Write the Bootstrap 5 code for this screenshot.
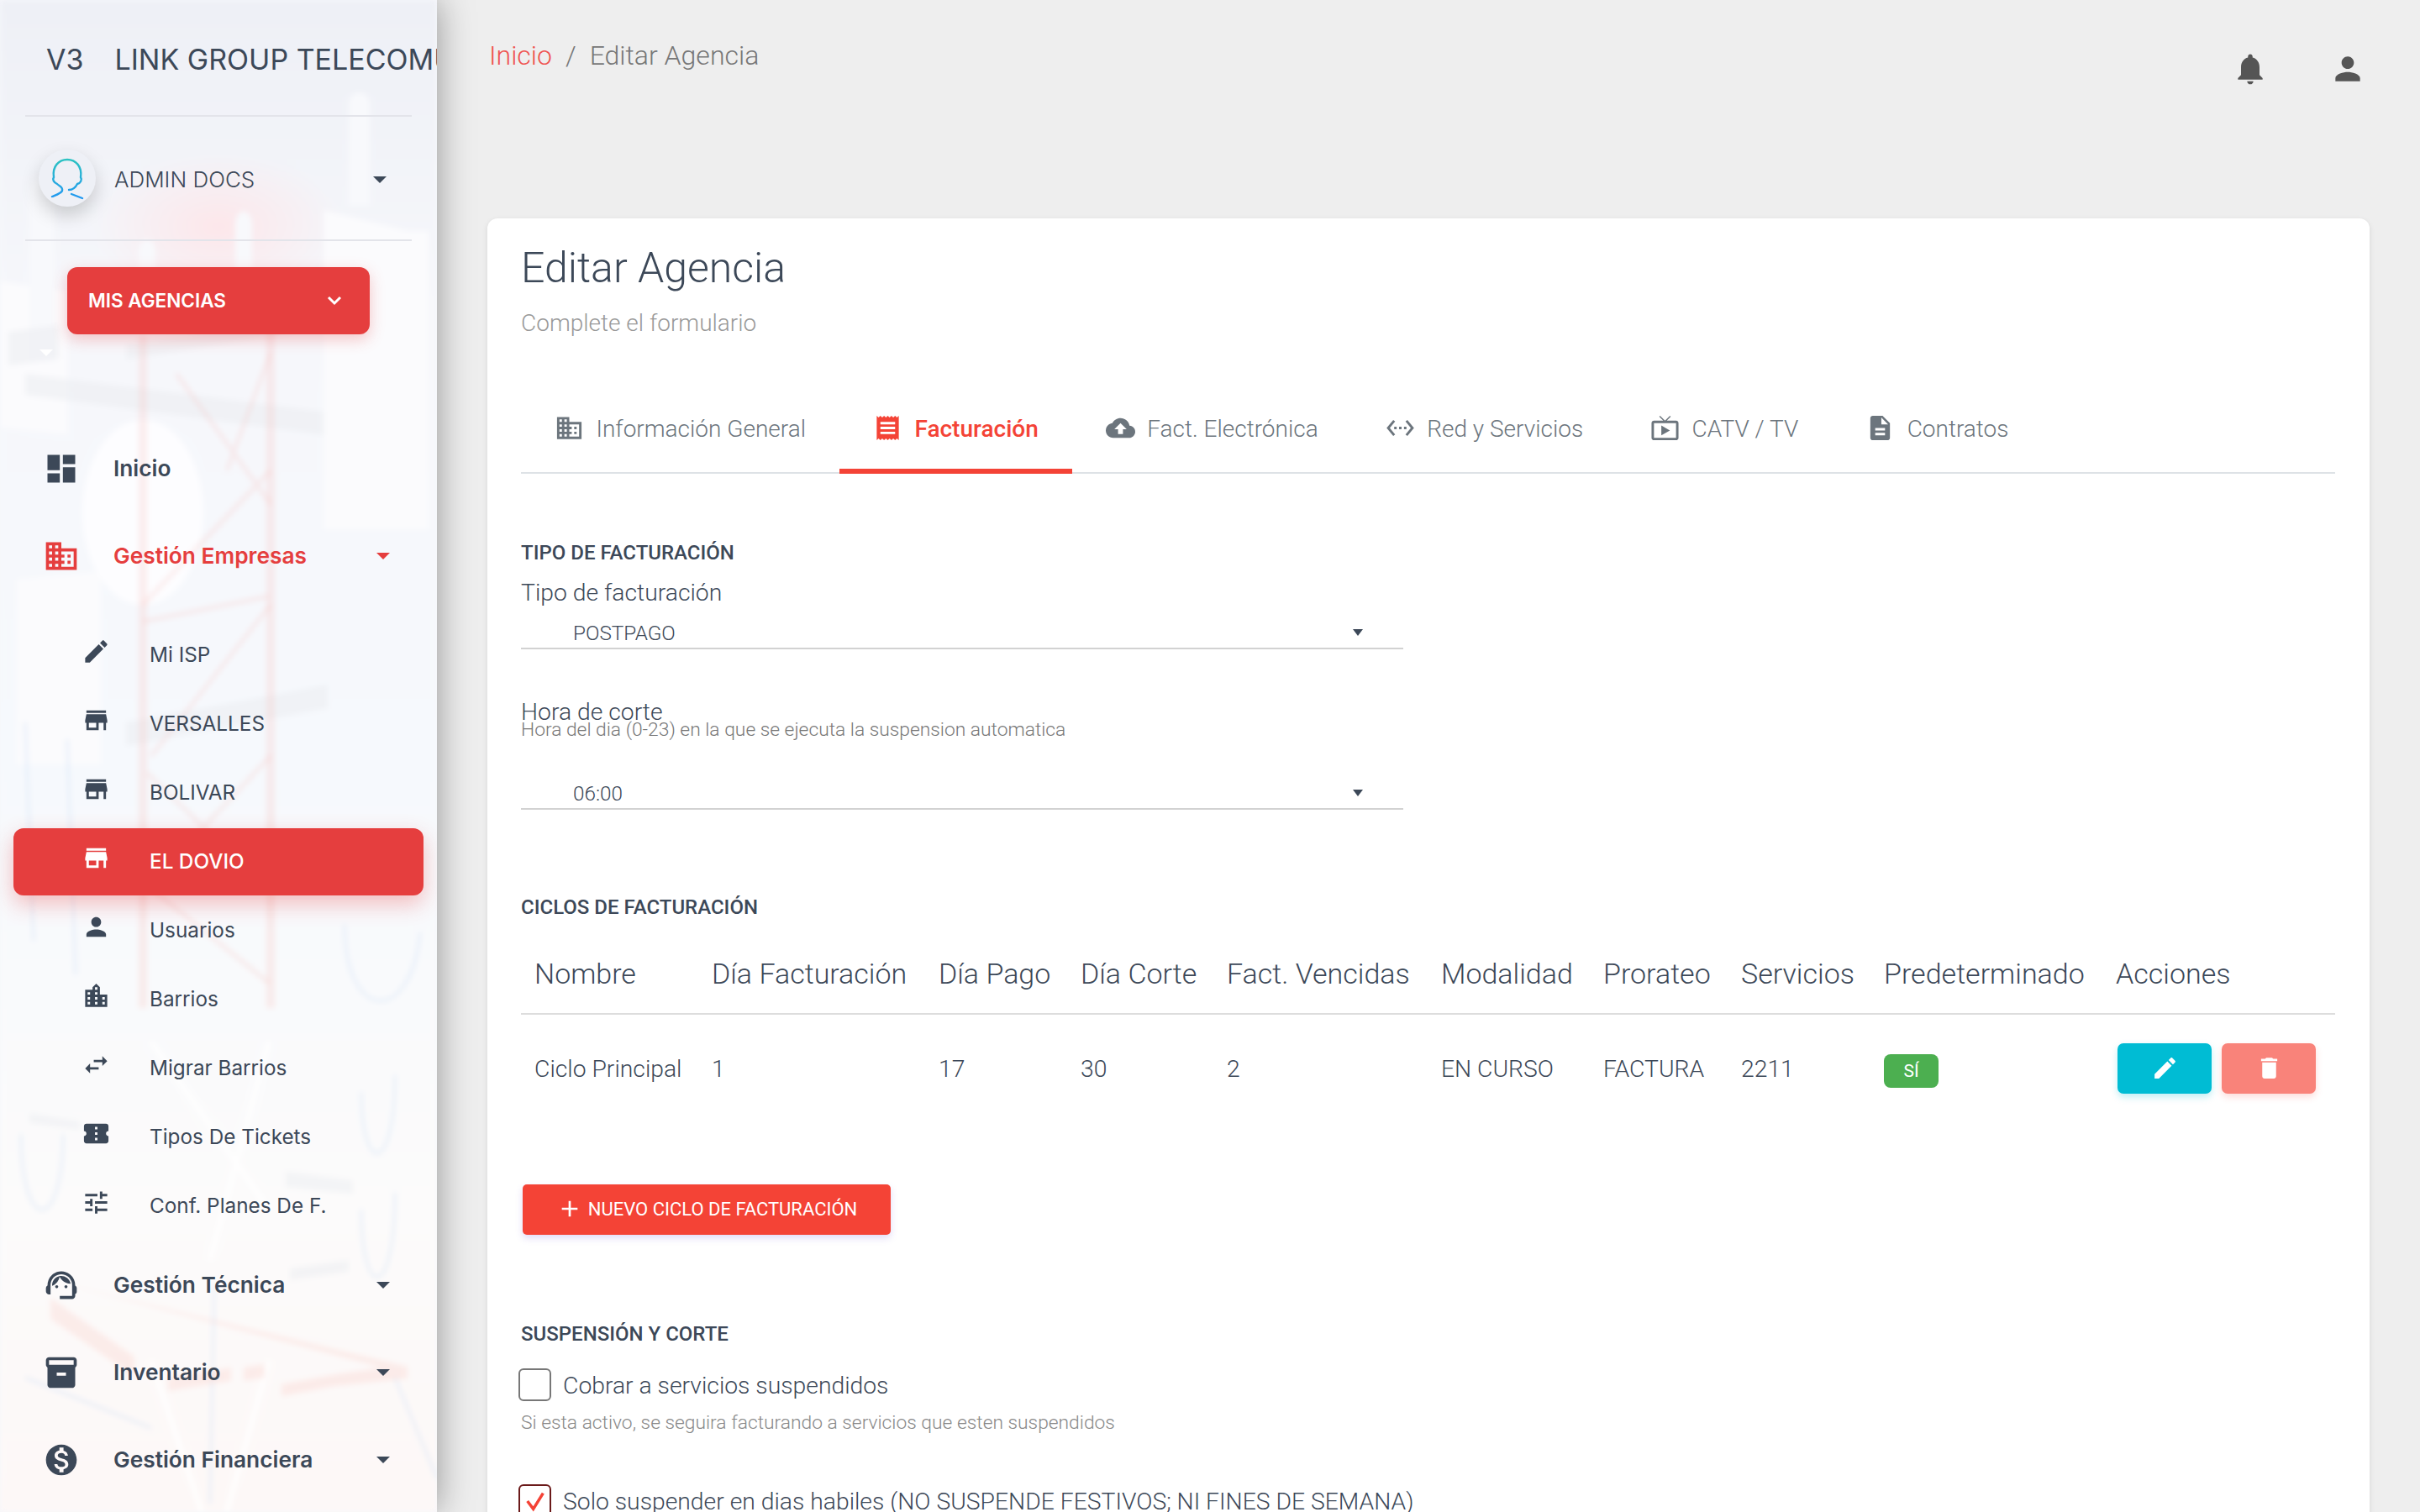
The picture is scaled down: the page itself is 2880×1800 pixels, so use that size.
<!DOCTYPE html>
<html lang="es">
<head>
    <meta charset="UTF-8">
    <meta name="viewport" content="width=device-width, initial-scale=1.0">
    <title>Editar Agencia</title>
    <link href="https://cdn.jsdelivr.net/npm/bootstrap@5.3.3/dist/css/bootstrap.min.css" rel="stylesheet">
    <style>
        html, body { height: 100%; }
        body { background: #eee; font-family: Roboto, "Liberation Sans", sans-serif; font-weight: 300; color: #3c4858; overflow: hidden; }
        svg { flex-shrink: 0; display: block; }
        svg:not([fill]) { fill: currentColor; }

        /* sidebar */
        .side-bar { width: 520px; height: 1800px; position: relative; overflow: hidden; flex-shrink: 0; font-family: Inter, "Liberation Sans", sans-serif; box-shadow: 0 0 40px rgba(0,0,0,.38); z-index: 2; background: #f6f7fb; }
        .side-art { position: absolute; left: 0; top: 0; width: 520px; height: 1800px; filter: blur(3px); }
        .side-inner { position: relative; }
        .side-logo { height: 139px; margin: 0 30px; padding: 3px 0 0 25px; border-bottom: 2px solid #e3e4ea; gap: 37px; font-size: 34px; font-weight: 400; white-space: nowrap; color: #3c4858; }
        .side-user { height: 148px; margin: 0 30px; padding: 3px 30px 0 16px; border-bottom: 2px solid #e3e4ea; font-size: 26px; }
        .side-avatar { width: 68px; height: 68px; border-radius: 50%; background: #eef0f6; box-shadow: 0 10px 22px rgba(0,0,0,.18); margin-right: 22px; margin-top: -3px; }
        .side-caret { width: 0; height: 0; border-left: 8px solid transparent; border-right: 8px solid transparent; border-top: 8px solid currentColor; }
        .side-agency { margin: 31px 0 0 80px; width: 360px; height: 80px; padding: 0 32px 0 24px; background: #e53e3e; color: #fff; border-radius: 12px; font-size: 22.5px; font-weight: 600; box-shadow: 0 6px 18px rgba(229,62,62,.28); }
        .side-agency:hover { background: #e53e3e; color: #fff; }
        .side-tick { left: 47px; top: 416px; border-left: 8px solid transparent; border-right: 8px solid transparent; border-top: 8px solid #fff; }
        .side-nav { margin: 120px 16px 0; gap: 24px; }
        .side-main { height: 80px; padding: 0 40px 0 35px; gap: 40px; font-size: 26.3px; font-weight: 600; color: #3c4858; text-decoration: none; }
        .side-main svg { width: 44px; height: 44px; }
        .side-main.is-open { color: #e53e3e; }
        .side-sub { margin-top: 14px; margin-bottom: -10px; gap: 2px; }
        .side-item { height: 80px; padding-left: 81px; gap: 46px; font-size: 24.3px; font-weight: 400; color: #3c4858; text-decoration: none; border-radius: 12px; padding-bottom: 1px; }
        .side-item svg { width: 35px; height: 35px; margin-top: -8px; }
        .side-item.is-active { background: #e53e3e; color: #fff; font-weight: 500; box-shadow: 0 10px 26px rgba(229,62,62,.32); }

        /* top bar */
        .page-main { min-width: 0; }
        .top-bar { height: 260px; padding: 39px 60px 0 62px; }
        .top-bar .breadcrumb { font-size: 32px; margin: 0; line-height: 54px; --bs-breadcrumb-divider-color: #777; --bs-breadcrumb-item-active-color: #777; --bs-breadcrumb-item-padding-x: 16px; }
        .top-bar .breadcrumb a { color: #ef5350; text-decoration: none; }
        .top-icons { gap: 72px; color: #555; padding-top: 21px; padding-right: 4px; }
        .top-icons svg { width: 44px; height: 44px; }

        /* card */
        .form-card { margin: 0 60px; padding: 29px 41px 0 40px; height: 1600px; border: 0; border-radius: 12px; box-shadow: 0 2px 6px rgba(0,0,0,.1); }
        .form-title { font-size: 50px; font-weight: 300; line-height: 60px; margin: 0; color: #3c4858; }
        .form-sub { font-size: 28px; line-height: 36px; margin: 18px 0 0; color: #999; }
        .form-tabs { margin-top: 53px; border-bottom: 2px solid #dee2e6; height: 108px; }
        .form-tabs .nav-link { height: 108px; padding: 7px 40px 0; gap: 14.5px; font-size: 28px; font-weight: 300; color: #6c757d; border-bottom: 6px solid transparent; border-radius: 0; margin-bottom: -2px; }
        .form-tabs .nav-link svg { width: 35px; height: 35px; margin-top: -2px; }
        .form-tabs .nav-link.is-on { color: #f44336; font-weight: 500; border-bottom-color: #f44336; }
        .sec-head { font-size: 24px; font-weight: 500; line-height: 30px; margin: 0; color: #3c4858; }
        .sec-one { margin-top: 79px; }
        .sec-two { margin-top: 101px; }
        .sec-three { margin-top: 103px; }
        .fld-label { font-size: 28.3px; line-height: 36px; margin: 15px 0 0; display: block; color: #3c4858; }
        .fld-select { width: 1050px; height: 43px; padding: 6px 40px 0 62px; font-size: 24.3px; font-weight: 300; color: #3c4858; border: 0; border-bottom: 2px solid #d2d2d2; border-radius: 0; background-color: transparent; background-size: 12px 8px; background-position: right 48px top 19px; background-image: url("data:image/svg+xml,%3csvg xmlns='http://www.w3.org/2000/svg' viewBox='0 0 12 8'%3e%3cpath fill='%233c4858' d='M0 0h12L6 8z'/%3e%3c/svg%3e"); box-shadow: none; }
        .fld-select-a { margin-top: 6px; }
        .fld-cut { margin-top: 60px; line-height: 30px; }
        .fld-help { font-size: 22.8px; line-height: 22px; color: #777; margin: -5px 0 0; }
        .fld-select-b { margin-top: 41px; }
        .cycle-table { margin: 16px 0 0; table-layout: fixed; width: 2159px; --bs-table-bg: transparent; }
        .cycle-table col:nth-child(1) { width: 211px; }
        .cycle-table col:nth-child(2) { width: 270px; }
        .cycle-table col:nth-child(3) { width: 169px; }
        .cycle-table col:nth-child(4) { width: 174px; }
        .cycle-table col:nth-child(5) { width: 255px; }
        .cycle-table col:nth-child(6) { width: 193px; }
        .cycle-table col:nth-child(7) { width: 164px; }
        .cycle-table col:nth-child(8) { width: 170px; }
        .cycle-table col:nth-child(9) { width: 276px; }
        .cycle-table col:nth-child(10) { width: 277px; }
        .cycle-table th { font-size: 34px; font-weight: 300; height: 96px; padding: 2px 0 0 16px; vertical-align: middle; border-bottom: 2px solid #ddd; color: #3c4858; white-space: nowrap; }
        .cycle-table td { font-size: 28.3px; font-weight: 300; height: 128px; padding: 3px 0 0 16px; vertical-align: middle; border: 0; color: #3c4858; }
        .cycle-yes { background: #4caf50; font-size: 21px; font-weight: 400; width: 65px; height: 40px; border-radius: 8px; line-height: 40px; padding: 0; display: block; margin-top: 4px; }
        .act-group { gap: 12px; margin-left: 2px; margin-top: -3px; }
        .act-btn { width: 112px; height: 60px; padding: 0; border: 0; border-radius: 7px; color: #fff; }
        .act-btn svg { width: 33px; height: 33px; }
        .act-edit { background: #00bcd4; box-shadow: 0 4px 8px rgba(0,188,212,.25); }
        .act-del { background: #f9837a; box-shadow: 0 4px 8px rgba(244,67,54,.18); }
        .act-edit:hover { background: #00bcd4; color: #fff; }
        .act-del:hover { background: #f9837a; color: #fff; }
        .add-btn { margin: 75px 0 0 2px; width: 438px; height: 60px; padding: 0 0 2px; background: #f44336; color: #fff; border: 0; border-radius: 5px; gap: 6px; font-size: 22px; font-weight: 400; box-shadow: 0 4px 8px rgba(120,90,220,.22); }
        .add-btn:hover { background: #f44336; color: #fff; }
        .add-btn svg { width: 32px; height: 32px; }
        .chk-row { gap: 14px; margin: 25px 0 0 -3px; padding: 0; min-height: 0; }
        .chk-row .form-check-input { width: 39px; height: 39px; margin: 0; float: none; border: 2px solid #777; border-radius: 6px; background-color: #fff; box-shadow: none; flex-shrink: 0; }
        .chk-row .form-check-input:checked { border-color: #6b1a1a; background-color: #fff; background-size: 28px; background-image: url("data:image/svg+xml,%3csvg xmlns='http://www.w3.org/2000/svg' viewBox='0 0 24 24'%3e%3cpath fill='none' stroke='%23f44336' stroke-width='3' d='M4 12l6 8L20 4'/%3e%3c/svg%3e"); }
        .chk-row .form-check-label { font-size: 28.3px; line-height: 39px; padding-top: 2px; color: #3c4858; white-space: nowrap; }
        .chk-help { font-size: 22.8px; line-height: 30px; color: #888; margin: 10px 0 0; }
        .chk-second { margin-top: 57px; }
    </style>
</head>
<body>

<div class="d-flex">
    <aside class="side-bar">
        <!-- faint photo of the antenna tower, behind the menu -->
        <svg class="side-art" viewBox="0 0 520 1800" fill="none">
            <defs>
                <linearGradient id="artBg" x1="0" y1="0" x2="0" y2="1">
                    <stop offset="0" stop-color="#eef0f6"/>
                    <stop offset=".2" stop-color="#f6f7fb"/>
                    <stop offset=".5" stop-color="#f6f9fd"/>
                    <stop offset=".8" stop-color="#fcfbfb"/>
                    <stop offset="1" stop-color="#fdf8f7"/>
                </linearGradient>
                <radialGradient id="artGlow">
                    <stop offset="0" stop-color="#ffe3e6" stop-opacity=".8"/>
                    <stop offset="1" stop-color="#ffe3e6" stop-opacity="0"/>
                </radialGradient>
            </defs>
            <rect width="520" height="1800" fill="url(#artBg)"/>
            <ellipse cx="260" cy="270" rx="150" ry="90" fill="url(#artGlow)"/>
            <path fill="#fbfbfd" d="M0 335l80 12v170l-80-8zM385 250l100 25 25 0V630H385zM20 690l100-10v230H20z"/>
            <path fill="#f8f9fc" d="M35 230c0-25 30-25 30 0v200H35zM415 125c0-20 25-20 25 0v120h-25zM280 268c0-22 20-22 20 0v60h-20zM165 300c0-20 20-20 20 0v40h-20z"/>
            <ellipse cx="170" cy="610" rx="72" ry="110" fill="#fdfdff"/>
            <path fill="#e9ebef" opacity=".5" d="M10 395l60-8v40l-60 8zM30 445l355 45v28L30 470zM150 410l200-30v16l-200 32zM150 860l240-45v28l-240 45z"/>
            <path stroke="#f5b5b0" stroke-width="10" opacity=".22" d="M170 400V1200M322 350V1200"/>
            <path stroke="#f5b5b0" stroke-width="5" opacity=".22" d="M210 445L322 600M322 420L270 560M170 720L322 560M170 740l150 -30M322 720L180 900M175 920l145 140M322 900L200 1030M170 1050l150 120"/>
            <path stroke="#c5daf2" stroke-width="3" opacity=".4" d="M30 860l10 260M80 880l10 280M410 1100c0 120 80 120 90 10M25 1350c0 120 50 120 50 0M430 1300c0 100 40 100 40-20M430 1440c0 110 40 110 40-20M255 1530l-5 260M180 1700L30 1640M470 1640l50 120"/>
            <path stroke="#fff" stroke-width="5" opacity=".9" d="M180 1240L320 1440M320 1240L250 1500M180 1620L240 1800M320 1620L270 1800"/>
            <path fill="#e8ebef" opacity=".45" d="M35 1325l60 10v10l-60-8zM340 1395l80 10v16l-80-8zM345 1510l70-10v14l-70 10z"/>
            <path fill="#f8d0cc" opacity=".35" d="M50 1522l435 105v14L400 1650l-65 12v-14l65-12 55-8-380-100zM60 1545l100 70v24L60 1570zM200 1640l75-12v16l-75 12zM290 1628l25-4v16l-25 4z"/>
        </svg>

        <div class="side-inner">
            <div class="side-logo d-flex align-items-center"><span>V3</span><span>LINK GROUP TELECOMUNICACIONES</span></div>

            <div class="side-user d-flex align-items-center">
                <span class="side-avatar d-flex align-items-center justify-content-center">
                    <svg width="56" height="56" viewBox="0 0 56 56" fill="none" stroke="url(#avatarLine)" stroke-width="2.4" stroke-linecap="round">
                        <defs>
                            <linearGradient id="avatarLine" gradientUnits="userSpaceOnUse" x1="28" y1="4" x2="28" y2="54">
                                <stop offset="0" stop-color="#2cc4c0"/>
                                <stop offset="1" stop-color="#2196f3"/>
                            </linearGradient>
                        </defs>
                        <path d="M16 35c-4-2-6-5-4-8-2-13 6-21 16-21s18 8 16 21c2 3 0 7-4 8-2 4-6 7-10 7M16 35c3 3 7 3 6 8-1 3-7 5-12 7M33 47l13 5"/>
                    </svg>
                </span>
                <span class="flex-grow-1 fw-light">ADMIN DOCS</span>
                <span class="side-caret"></span>
            </div>

            <a href="#" class="btn side-agency d-flex align-items-center justify-content-between">
                <span>MIS AGENCIAS</span>
                <svg width="18" height="12" viewBox="0 0 18 12" fill="none" stroke="#fff" stroke-width="3"><path d="M2 2l7 7 7-7"/></svg>
            </a>
            <span class="side-tick position-absolute"></span>

            <nav class="side-nav d-flex flex-column">
                <a href="#" class="side-main d-flex align-items-center">
                    <svg viewBox="0 0 24 24"><path d="M3 13h8V3H3v10zm0 8h8v-6H3v6zm10 0h8V11h-8v10zm0-18v6h8V3h-8z"/></svg>
                    <span class="flex-grow-1">Inicio</span>
                </a>
                <a href="#" class="side-main is-open d-flex align-items-center">
                    <svg viewBox="0 0 24 24"><path d="M12 7V3H2v18h20V7H12zM6 19H4v-2h2v2zm0-4H4v-2h2v2zm0-4H4V9h2v2zm0-4H4V5h2v2zm4 12H8v-2h2v2zm0-4H8v-2h2v2zm0-4H8V9h2v2zm0-4H8V5h2v2zm10 12h-8v-2h2v-2h-2v-2h2v-2h-2V9h8v10zm-2-8h-2v2h2v-2zm0 4h-2v2h2v-2z"/></svg>
                    <span class="flex-grow-1">Gestión Empresas</span>
                    <span class="side-caret"></span>
                </a>
                <div class="side-sub d-flex flex-column">
                    <a href="#" class="side-item d-flex align-items-center">
                        <svg viewBox="0 0 24 24"><path d="M3 17.25V21h3.75L17.81 9.94l-3.75-3.75L3 17.25zM20.71 7.04c.39-.39.39-1.02 0-1.41l-2.34-2.34c-.39-.39-1.02-.39-1.41 0l-1.83 1.83 3.75 3.75 1.83-1.83z"/></svg>
                        <span>Mi ISP</span>
                    </a>
                    <a href="#" class="side-item d-flex align-items-center">
                        <svg viewBox="0 0 24 24"><path d="M20 4H4v2h16V4zm1 10v-2l-1-5H4l-1 5v2h1v6h10v-6h4v6h2v-6h1zm-9 4H6v-4h6v4z"/></svg>
                        <span>VERSALLES</span>
                    </a>
                    <a href="#" class="side-item d-flex align-items-center">
                        <svg viewBox="0 0 24 24"><path d="M20 4H4v2h16V4zm1 10v-2l-1-5H4l-1 5v2h1v6h10v-6h4v6h2v-6h1zm-9 4H6v-4h6v4z"/></svg>
                        <span>BOLIVAR</span>
                    </a>
                    <a href="#" class="side-item is-active d-flex align-items-center">
                        <svg viewBox="0 0 24 24"><path d="M20 4H4v2h16V4zm1 10v-2l-1-5H4l-1 5v2h1v6h10v-6h4v6h2v-6h1zm-9 4H6v-4h6v4z"/></svg>
                        <span>EL DOVIO</span>
                    </a>
                    <a href="#" class="side-item d-flex align-items-center">
                        <svg viewBox="0 0 24 24"><path d="M12 12c2.21 0 4-1.79 4-4s-1.79-4-4-4-4 1.79-4 4 1.79 4 4 4zm0 2c-2.67 0-8 1.34-8 4v2h16v-2c0-2.66-5.33-4-8-4z"/></svg>
                        <span>Usuarios</span>
                    </a>
                    <a href="#" class="side-item d-flex align-items-center">
                        <svg viewBox="0 0 24 24"><path d="M15 11V5l-3-3-3 3v2H3v14h18V11h-6zm-8 8H5v-2h2v2zm0-4H5v-2h2v2zm0-4H5V9h2v2zm6 8h-2v-2h2v2zm0-4h-2v-2h2v2zm0-4h-2V9h2v2zm0-4h-2V5h2v2zm6 12h-2v-2h2v2zm0-4h-2v-2h2v2z"/></svg>
                        <span>Barrios</span>
                    </a>
                    <a href="#" class="side-item d-flex align-items-center">
                        <svg viewBox="0 0 24 24"><path d="M6.99 11L3 15l3.99 4v-3H14v-2H6.99v-3zM21 9l-3.99-4v3H10v2h7.01v3L21 9z"/></svg>
                        <span>Migrar Barrios</span>
                    </a>
                    <a href="#" class="side-item d-flex align-items-center">
                        <svg viewBox="0 0 24 24"><path d="M22 10V6c0-1.11-.9-2-2-2H4c-1.1 0-1.99.89-1.99 2v4c1.1 0 1.99.9 1.99 2s-.89 2-2 2v4c0 1.1.9 2 2 2h16c1.1 0 2-.9 2-2v-4c-1.1 0-2-.9-2-2s.9-2 2-2zm-9 7.5h-2v-2h2v2zm0-4.5h-2v-2h2v2zm0-4.5h-2v-2h2v2z"/></svg>
                        <span>Tipos De Tickets</span>
                    </a>
                    <a href="#" class="side-item d-flex align-items-center">
                        <svg viewBox="0 0 24 24"><path d="M3 17v2h6v-2H3zM3 5v2h10V5H3zm10 16v-2h8v-2h-8v-2h-2v6h2zM7 9v2H3v2h4v2h2V9H7zm14 4v-2H11v2h10zm-6-4h2V7h4V5h-4V3h-2v6z"/></svg>
                        <span>Conf. Planes De F.</span>
                    </a>
                </div>
                <a href="#" class="side-main d-flex align-items-center">
                    <svg viewBox="0 0 24 24"><path d="M21 12.22C21 6.73 16.74 3 12 3c-4.69 0-9 3.65-9 9.28-.6.34-1 .98-1 1.72v2c0 1.1.9 2 2 2h1v-6.1c0-3.87 3.13-7 7-7s7 3.13 7 7V19h-8v2h8c1.1 0 2-.9 2-2v-1.22c.59-.31 1-.92 1-1.62v-2.3c0-.7-.41-1.31-1-1.64z"/><circle cx="9" cy="13" r="1"/><circle cx="15" cy="13" r="1"/><path d="M18 11.03C17.52 8.18 15.04 6 12.05 6c-3.03 0-6.29 2.51-6.03 6.45 2.47-1.01 4.33-3.21 4.86-5.89 1.31 2.63 4 4.44 7.12 4.47z"/></svg>
                    <span class="flex-grow-1">Gestión Técnica</span>
                    <span class="side-caret"></span>
                </a>
                <a href="#" class="side-main d-flex align-items-center">
                    <svg viewBox="0 0 24 24"><path d="M20 2H4c-1 0-2 .9-2 2v3.01c0 .72.43 1.34 1 1.69V20c0 1.1 1.1 2 2 2h14c.9 0 2-.9 2-2V8.7c.57-.35 1-.97 1-1.69V4c0-1.1-1-2-2-2zm-5 12H9v-2h6v2zm5-7H4V4l16-.02V7z"/></svg>
                    <span class="flex-grow-1">Inventario</span>
                    <span class="side-caret"></span>
                </a>
                <a href="#" class="side-main d-flex align-items-center">
                    <svg viewBox="0 0 24 24"><path d="M12 2C6.48 2 2 6.48 2 12s4.48 10 10 10 10-4.48 10-10S17.52 2 12 2zm1.41 16.09V20h-2.67v-1.93c-1.71-.36-3.16-1.46-3.27-3.4h1.96c.1 1.05.82 1.87 2.65 1.87 1.96 0 2.4-.98 2.4-1.59 0-.83-.44-1.61-2.67-2.14-2.48-.6-4.18-1.62-4.18-3.67 0-1.72 1.39-2.84 3.11-3.21V4h2.67v1.95c1.86.45 2.79 1.86 2.87 3.39H14.3c-.05-1.11-.64-1.87-2.22-1.87-1.5 0-2.4.68-2.4 1.64 0 .84.65 1.39 2.67 1.91s4.18 1.39 4.18 3.91c-.01 1.83-1.38 2.83-3.12 3.16z"/></svg>
                    <span class="flex-grow-1">Gestión Financiera</span>
                    <span class="side-caret"></span>
                </a>
            </nav>
        </div>
    </aside>

    <main class="page-main flex-grow-1">
        <div class="top-bar d-flex justify-content-between align-items-start">
            <ol class="breadcrumb">
                <li class="breadcrumb-item"><a href="#">Inicio</a></li>
                <li class="breadcrumb-item active">Editar Agencia</li>
            </ol>
            <div class="top-icons d-flex">
                <svg viewBox="0 0 24 24"><path d="M12 22c1.1 0 2-.9 2-2h-4c0 1.1.89 2 2 2zm6-6v-5c0-3.07-1.64-5.64-4.5-6.32V4c0-.83-.67-1.5-1.5-1.5s-1.5.67-1.5 1.5v.68C7.63 5.36 6 7.92 6 11v5l-2 2v1h16v-1l-2-2z"/></svg>
                <svg viewBox="0 0 24 24"><path d="M12 12c2.21 0 4-1.79 4-4s-1.79-4-4-4-4 1.79-4 4 1.79 4 4 4zm0 2c-2.67 0-8 1.34-8 4v2h16v-2c0-2.66-5.33-4-8-4z"/></svg>
            </div>
        </div>

        <div class="card form-card">
            <h1 class="form-title">Editar Agencia</h1>
            <p class="form-sub">Complete el formulario</p>

            <ul class="nav form-tabs">
                <li class="nav-item"><a href="#" class="nav-link d-flex align-items-center">
                    <svg viewBox="0 0 24 24"><path d="M12 7V3H2v18h20V7H12zM6 19H4v-2h2v2zm0-4H4v-2h2v2zm0-4H4V9h2v2zm0-4H4V5h2v2zm4 12H8v-2h2v2zm0-4H8v-2h2v2zm0-4H8V9h2v2zm0-4H8V5h2v2zm10 12h-8v-2h2v-2h-2v-2h2v-2h-2V9h8v10zm-2-8h-2v2h2v-2zm0 4h-2v2h2v-2z"/></svg>
                    Información General</a></li>
                <li class="nav-item"><a href="#" class="nav-link is-on d-flex align-items-center">
                    <svg viewBox="0 0 24 24"><path d="M18 17H6v-2h12v2zm0-4H6v-2h12v2zm0-4H6V7h12v2zM3 22l1.5-1.5L6 22l1.5-1.5L9 22l1.5-1.5L12 22l1.5-1.5L15 22l1.5-1.5L18 22l1.5-1.5L21 22V2l-1.5 1.5L18 2l-1.5 1.5L15 2l-1.5 1.5L12 2l-1.5 1.5L9 2 7.5 3.5 6 2 4.5 3.5 3 2v20z"/></svg>
                    Facturación</a></li>
                <li class="nav-item"><a href="#" class="nav-link d-flex align-items-center">
                    <svg viewBox="0 0 24 24"><path d="M19.35 10.04C18.67 6.59 15.64 4 12 4 9.11 4 6.6 5.64 5.35 8.04 2.34 8.36 0 10.91 0 14c0 3.31 2.69 6 6 6h13c2.76 0 5-2.24 5-5 0-2.64-2.05-4.78-4.65-4.96zM14 13v4h-4v-4H7l5-5 5 5h-3z"/></svg>
                    Fact. Electrónica</a></li>
                <li class="nav-item"><a href="#" class="nav-link d-flex align-items-center">
                    <svg viewBox="0 0 24 24"><path d="M7.77 6.76L6.23 5.48.82 12l5.41 6.52 1.54-1.28L3.42 12l4.35-5.24zM7 13h2v-2H7v2zm10-2h-2v2h2v-2zm-6 2h2v-2h-2v2zm6.77-7.52l-1.54 1.28L20.58 12l-4.35 5.24 1.54 1.28L23.18 12l-5.41-6.52z"/></svg>
                    Red y Servicios</a></li>
                <li class="nav-item"><a href="#" class="nav-link d-flex align-items-center">
                    <svg viewBox="0 0 24 24"><path d="M21 6h-7.59l3.29-3.29L16 2l-4 4-4-4-.71.71L10.59 6H3c-1.1 0-2 .89-2 2v12c0 1.1.9 2 2 2h18c1.1 0 2-.9 2-2V8c0-1.11-.9-2-2-2zm0 14H3V8h18v12zM9 10v8l7-4z"/></svg>
                    CATV / TV</a></li>
                <li class="nav-item"><a href="#" class="nav-link d-flex align-items-center">
                    <svg viewBox="0 0 24 24"><path d="M14 2H6c-1.1 0-1.99.9-1.99 2L4 20c0 1.1.89 2 1.99 2H18c1.1 0 2-.9 2-2V8l-6-6zm2 16H8v-2h8v2zm0-4H8v-2h8v2zm-3-5V3.5L18.5 9H13z"/></svg>
                    Contratos</a></li>
            </ul>

            <h2 class="sec-head sec-one">TIPO DE FACTURACIÓN</h2>
            <label class="fld-label" for="tipoFact">Tipo de facturación</label>
            <select class="form-select fld-select fld-select-a" id="tipoFact">
                <option>POSTPAGO</option>
                <option>PREPAGO</option>
            </select>

            <label class="fld-label fld-cut" for="horaCorte">Hora de corte</label>
            <p class="fld-help">Hora del dia (0-23) en la que se ejecuta la suspension automatica</p>
            <select class="form-select fld-select fld-select-b" id="horaCorte">
                <option>06:00</option>
            </select>

            <h2 class="sec-head sec-two">CICLOS DE FACTURACIÓN</h2>
            <table class="table cycle-table">
                <colgroup><col><col><col><col><col><col><col><col><col><col></colgroup>
                <thead>
                    <tr>
                        <th>Nombre</th><th>Día Facturación</th><th>Día Pago</th><th>Día Corte</th><th>Fact. Vencidas</th>
                        <th>Modalidad</th><th>Prorateo</th><th>Servicios</th><th>Predeterminado</th><th>Acciones</th>
                    </tr>
                </thead>
                <tbody>
                    <tr>
                        <td>Ciclo Principal</td><td>1</td><td>17</td><td>30</td><td>2</td>
                        <td>EN CURSO</td><td>FACTURA</td><td>2211</td>
                        <td><span class="badge cycle-yes">SÍ</span></td>
                        <td>
                            <div class="act-group d-flex">
                                <button class="btn act-btn act-edit d-flex align-items-center justify-content-center"><svg viewBox="0 0 24 24"><path d="M3 17.25V21h3.75L17.81 9.94l-3.75-3.75L3 17.25zM20.71 7.04c.39-.39.39-1.02 0-1.41l-2.34-2.34c-.39-.39-1.02-.39-1.41 0l-1.83 1.83 3.75 3.75 1.83-1.83z"/></svg></button>
                                <button class="btn act-btn act-del d-flex align-items-center justify-content-center"><svg viewBox="0 0 24 24"><path d="M6 19c0 1.1.9 2 2 2h8c1.1 0 2-.9 2-2V7H6v12zM19 4h-3.5l-1-1h-5l-1 1H5v2h14V4z"/></svg></button>
                            </div>
                        </td>
                    </tr>
                </tbody>
            </table>

            <button class="btn add-btn d-flex align-items-center justify-content-center">
                <svg viewBox="0 0 24 24"><path d="M19 13h-6v6h-2v-6H5v-2h6V5h2v6h6v2z"/></svg>
                NUEVO CICLO DE FACTURACIÓN
            </button>

            <h2 class="sec-head sec-three">SUSPENSIÓN Y CORTE</h2>
            <div class="form-check chk-row d-flex align-items-center">
                <input class="form-check-input" type="checkbox" id="cobrarSusp">
                <label class="form-check-label" for="cobrarSusp">Cobrar a servicios suspendidos</label>
            </div>
            <p class="chk-help">Si esta activo, se seguira facturando a servicios que esten suspendidos</p>
            <div class="form-check chk-row chk-second d-flex align-items-center">
                <input class="form-check-input" type="checkbox" id="soloHabiles" checked>
                <label class="form-check-label" for="soloHabiles">Solo suspender en dias habiles (NO SUSPENDE FESTIVOS; NI FINES DE SEMANA)</label>
            </div>
        </div>
    </main>
</div>

<script src="https://cdn.jsdelivr.net/npm/bootstrap@5.3.3/dist/js/bootstrap.bundle.min.js"></script>
</body>
</html>
